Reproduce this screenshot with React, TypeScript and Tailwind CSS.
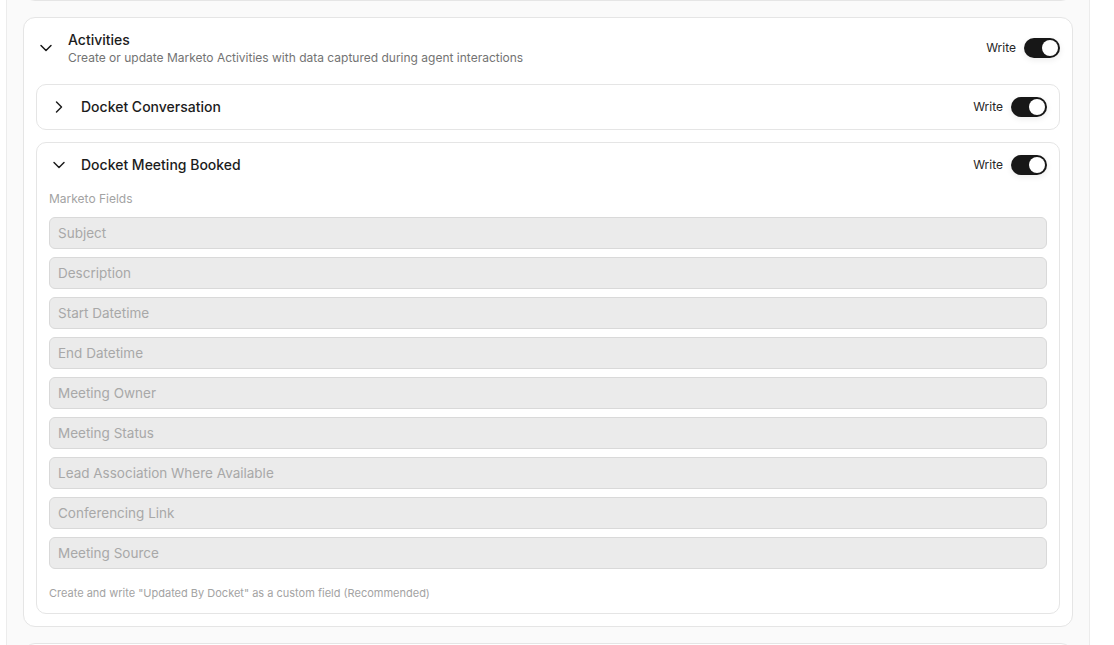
import React, { useState } from "react";
import { ChevronDown, ChevronRight } from "lucide-react";

const MEETING_FIELDS = ["Subject", "Description", "Start Datetime", "End Datetime", "Meeting Owner", "Meeting Status", "Lead Association Where Available", "Conferencing Link", "Meeting Source"];

function WriteToggle({ checked, onChange }: { checked: boolean; onChange: (v: boolean) => void }) {
  return (
    <div className="flex items-center gap-2">
      <span className="text-xs text-[#262626]">Write</span>
      <button
        type="button"
        role="switch"
        aria-checked={checked}
        onClick={() => onChange(!checked)}
        className={`flex h-5 w-9 items-center rounded-full p-[2px] shadow-[0_2px_6px_rgba(0,0,0,0.08)] ${checked ? "bg-[#171717]" : "bg-[#d4d4d4]"}`}
      >
        <span className={`block h-4 w-4 rounded-full bg-white transition-transform ${checked ? "translate-x-4" : "translate-x-0"}`} />
      </button>
    </div>
  );
}

function ActivityCard({ title, defaultOpen = false, children }: { title: string; defaultOpen?: boolean; children?: React.ReactNode }) {
  const [open, setOpen] = useState(defaultOpen);
  const [write, setWrite] = useState(true);

  return (
    <div className="rounded-[10px] border border-[#e5e5e5] bg-white p-3">
      <div className="flex items-center justify-between">
        <button type="button" onClick={() => setOpen(!open)} className="flex items-center gap-3 text-sm font-medium text-[#1c1c1c]">
          {open ? <ChevronDown size={20} strokeWidth={1.75} /> : <ChevronRight size={20} strokeWidth={1.75} />}
          <span>{title}</span>
        </button>
        <WriteToggle checked={write} onChange={setWrite} />
      </div>
      {open && children}
    </div>
  );
}

export default function App() {
  const [activitiesOpen, setActivitiesOpen] = useState(true);
  const [activitiesWrite, setActivitiesWrite] = useState(true);

  return (
    <div className="h-[645px] overflow-hidden bg-white" style={{ fontFamily: "Inter, 'Liberation Sans', sans-serif" }}>
      <div className="ml-[6px] flow-root h-full w-[1084px] overflow-hidden border-x border-[#ececec] bg-[#fafafa] px-4">
        <div className="-mt-[59px] flex flex-col gap-4">
          {/* previous section, scrolled out of view */}
          <div className="h-[60px] rounded-xl border border-[#e5e5e5] bg-white" />

          <div className="rounded-xl border border-[#e5e5e5] bg-white p-3">
            <div className="flex items-center justify-between">
              <button type="button" onClick={() => setActivitiesOpen(!activitiesOpen)} className="flex items-center gap-3 text-left">
                <ChevronDown size={20} strokeWidth={1.75} className="text-[#171717]" />
                <div>
                  <div className="text-sm font-medium leading-5 text-[#1c1c1c]">Activities</div>
                  <div className="text-xs leading-4 text-[#737373]">Create or update Marketo Activities with data captured during agent interactions</div>
                </div>
              </button>
              <WriteToggle checked={activitiesWrite} onChange={setActivitiesWrite} />
            </div>

            {activitiesOpen && (
              <div className="mt-[18px] flex flex-col gap-3">
                <ActivityCard title="Docket Conversation" />
                <ActivityCard title="Docket Meeting Booked" defaultOpen>
                  <div className="mt-4 mb-[10px] text-xs leading-4 text-[#a3a3a3]">Marketo Fields</div>
                  <div className="flex flex-col gap-2">
                    {MEETING_FIELDS.map((field) => (
                      <input
                        key={field}
                        disabled
                        placeholder={field}
                        className="h-8 w-full rounded-md border border-[#d9d9d9] bg-[#ebebeb] px-2 text-[13.5px] text-[#171717] placeholder:text-[#a8a8a8]"
                      />
                    ))}
                  </div>
                  <div className="mt-4 text-[11px] leading-4 text-[#a3a3a3]">Create and write "Updated By Docket" as a custom field (Recommended)</div>
                </ActivityCard>
              </div>
            )}
          </div>

          <div className="h-[60px] rounded-xl border border-[#e5e5e5] bg-white" />
        </div>
      </div>
    </div>
  );
}
